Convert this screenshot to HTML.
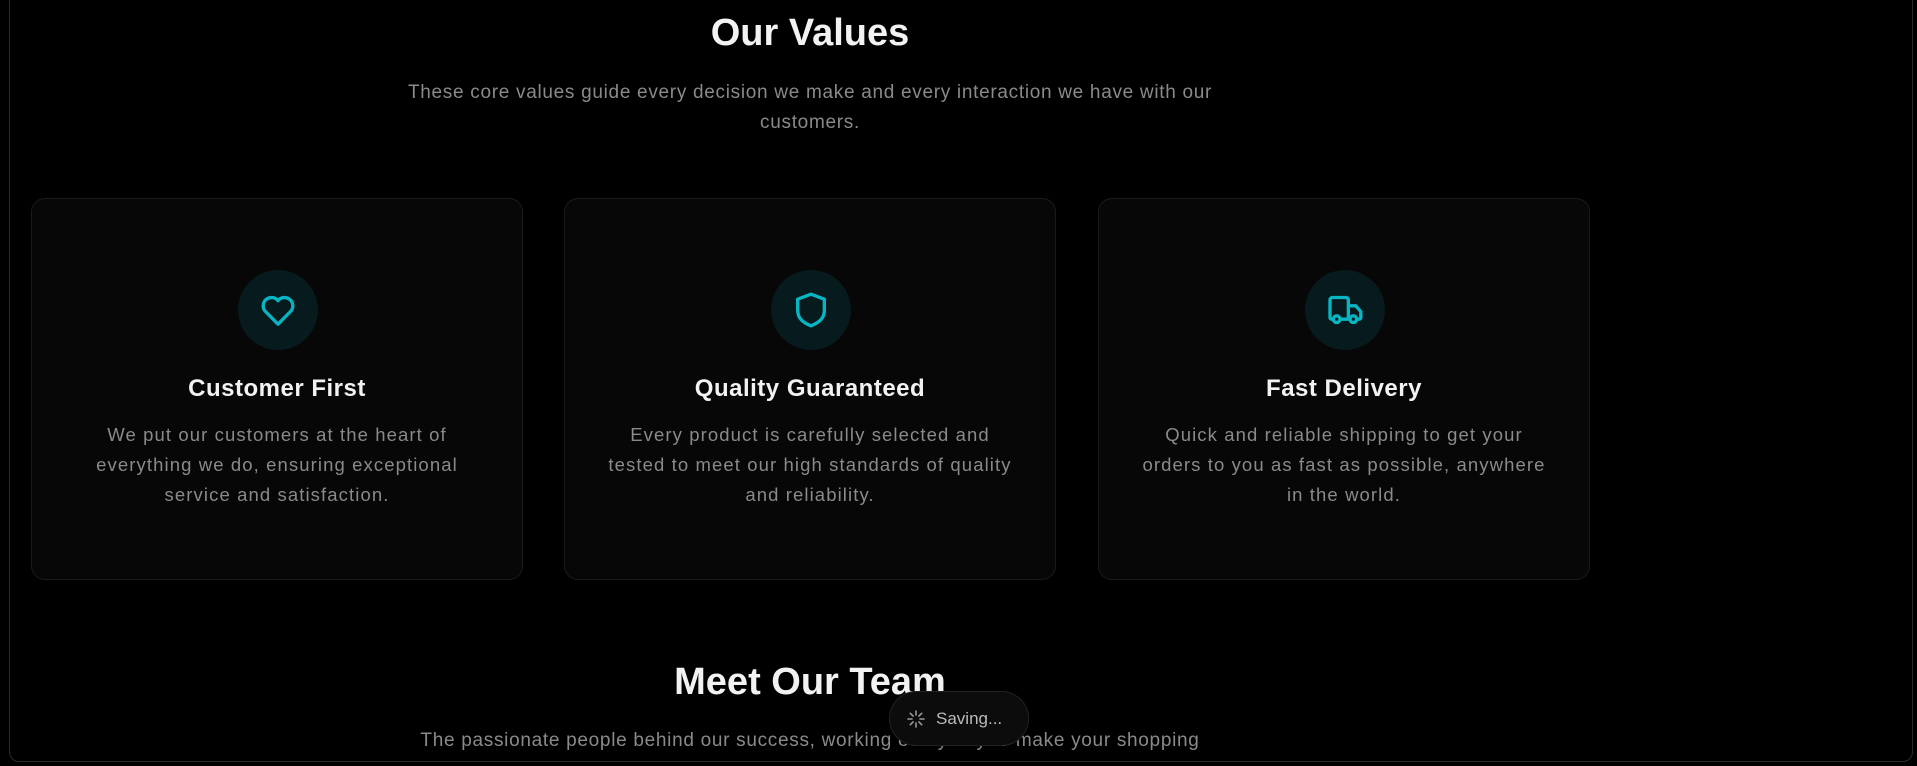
<!DOCTYPE html>
<html><head><style>
*{margin:0;padding:0;box-sizing:border-box}
body{width:1917px;height:766px;background:#000;font-family:"Liberation Sans",sans-serif;overflow:hidden;position:relative}
.frame{position:absolute;left:9px;top:-20px;width:1904px;height:782px;border:1px solid #2a2a2a;border-radius:10px}
h2{position:absolute;left:0;width:1620px;text-align:center;color:#f2f2f2;font-size:38px;font-weight:bold}
.sub{position:absolute;left:360px;width:900px;text-align:center;color:#8a8a8a;font-size:19px;line-height:30px;letter-spacing:0.7px}
.card{position:absolute;top:198px;width:492px;height:382px;background:#070707;border:1px solid #1b1b1b;border-radius:14px;text-align:center}
.ic{position:absolute;left:206px;top:71px;width:80px;height:80px;border-radius:50%;background:#071a1d;display:flex;align-items:center;justify-content:center}
.card h3{position:absolute;top:176px;width:100%;color:#f2f2f2;font-size:24px;font-weight:bold;letter-spacing:0.5px}
.card p{position:absolute;top:221px;left:36px;right:36px;color:#8a8a8a;font-size:18.5px;line-height:30px;letter-spacing:1.1px}
.pill{position:absolute;left:889px;top:691px;width:140px;height:55px;border-radius:28px;background:#0c0c0c;border:1px solid #222;color:#bbb;font-size:17px;display:flex;align-items:center;padding-left:16px;gap:10px}
</style></head><body>
<div class="frame"></div>
<h2 style="top:12px">Our Values</h2>
<div class="sub" style="top:78px">These core values guide every decision we make and every interaction we have with our customers.</div>
<div class="card" style="left:31px"><div class="ic"><svg width="40" height="40" viewBox="0 0 24 24" fill="none" stroke="#06b6c4" stroke-width="2" stroke-linejoin="round"><path d="M12 20.5 4.2 12.6A4.8 4.8 0 0 1 12 6.4a4.8 4.8 0 0 1 7.8 6.2Z"/></svg></div><h3>Customer First</h3><p>We put our customers at the heart of everything we do, ensuring exceptional service and satisfaction.</p></div>
<div class="card" style="left:564px"><div class="ic"><svg width="40" height="40" viewBox="0 0 24 24" fill="none" stroke="#06b6c4" stroke-width="2" stroke-linejoin="round"><path d="M12 21.5c5-2 8-4.5 8-9.5V5.5l-8-3-8 3V12c0 5 3 7.5 8 9.5Z"/></svg></div><h3>Quality Guaranteed</h3><p>Every product is carefully selected and tested to meet our high standards of quality and reliability.</p></div>
<div class="card" style="left:1098px"><div class="ic"><svg width="40" height="40" viewBox="0 0 24 24" fill="none" stroke="#06b6c4" stroke-width="2" stroke-linejoin="round" stroke-linecap="round"><path d="M14 17V6a1.5 1.5 0 0 0-1.5-1.5h-8A1.5 1.5 0 0 0 3 6v10.5a1 1 0 0 0 1 1h1M9 17.5h6M19 17.5h1.5a1 1 0 0 0 1-1v-3.5l-3-3.5H14"/><circle cx="7" cy="17.5" r="2"/><circle cx="17" cy="17.5" r="2"/></svg></div><h3>Fast Delivery</h3><p>Quick and reliable shipping to get your orders to you as fast as possible, anywhere in the world.</p></div>
<h2 style="top:661px">Meet Our Team</h2>
<div class="sub" style="top:726px">The passionate people behind our success, working every day to make your shopping</div>
<div class="pill"><svg width="20" height="20" viewBox="0 0 20 20" stroke="#999" stroke-width="1.6" stroke-linecap="round"><path d="M10 2v4M10 14v4M2 10h4M14 10h4M4.3 4.3l2.8 2.8M12.9 12.9l2.8 2.8M4.3 15.7l2.8-2.8M12.9 7.1l2.8-2.8"/></svg>Saving...</div>
</body></html>
